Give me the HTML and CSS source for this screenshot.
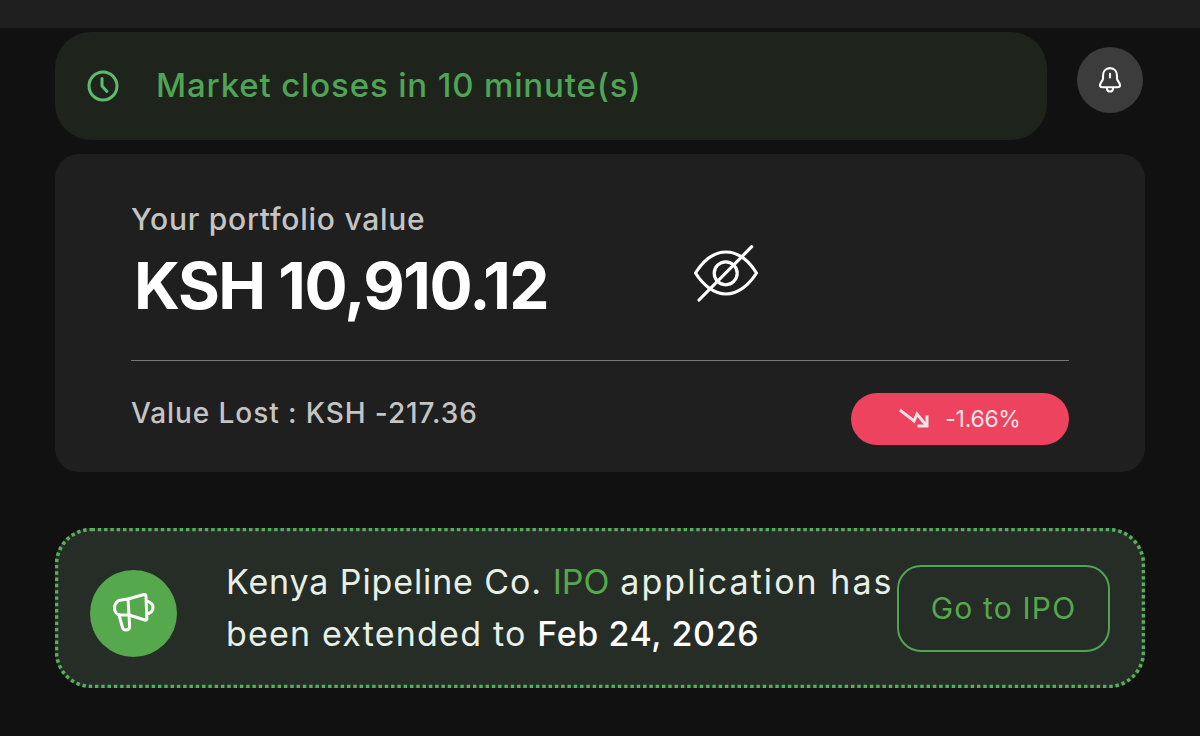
FILE: index.html
```html
<!DOCTYPE html>
<html lang="en">

<head>
    <meta charset="UTF-8">
    <meta name="viewport" content="width=device-width, initial-scale=1.0">
    <title>Portfolio</title>
    <link rel="stylesheet" href="styles.css">
</head>

<body>
    <div class="topbar"></div>
    <main>
        <div class="status-row">
            <div class="market-status">
                <svg class="clock-icon" viewBox="0 0 32 32" fill="none" stroke="#5fbb6c" stroke-width="3" stroke-linecap="round" stroke-linejoin="round">
                    <circle cx="16" cy="16" r="14"/>
                    <path d="M15 8.500V16l5 5.500"/>
                </svg>
                <span>Market closes in 10 minute(s)</span>
            </div>
            <button class="bell-button" aria-label="Notifications">
                <svg viewBox="0 0 24 24" width="30" height="30" fill="none" stroke="#fff" stroke-width="1.700" stroke-linecap="round" stroke-linejoin="round">
                    <path d="M12 2.500c-3.600 0-5.600 2.800-5.600 6v2.500c0 1.500-2.400 3.300-2.400 5 0 1.200.8 1.800 2 1.800h12c1.200 0 2-.6 2-1.800 0-1.700-2.400-3.500-2.400-5V8.500c0-3.200-2-6-5.600-6z"/>
                    <path d="M9.500 19c.3 1.500 1.300 2.200 2.500 2.200s2.200-.7 2.500-2.200"/>
                    <path d="M12 7v3"/>
                </svg>
            </button>
        </div>

        <section class="portfolio-card">
            <div class="portfolio-label">Your portfolio value</div>
            <div class="portfolio-value-row">
                <div class="portfolio-value">KSH 10,910.12</div>
                <svg class="eye-icon" viewBox="0 0 66 58" fill="none" stroke="#fff" stroke-width="3.200" stroke-linecap="round" stroke-linejoin="round">
                    <path d="M2.500 29C10 17 20 8 33 8S56 17 63.500 29C56 41 45 50 33 50S10 41 2.500 29z"/>
                    <circle cx="32.700" cy="29.300" r="11.500"/>
                    <path d="M58.700 2.700L6 56"/>
                </svg>
            </div>
            <hr class="divider">
            <div class="portfolio-footer">
                <div class="value-lost">Value Lost : KSH -217.36</div>
                <div class="change-pill">
                    <svg viewBox="0 0 30 20" width="30" height="20" fill="none" stroke="#f0e4e6" stroke-width="3" stroke-linecap="square" stroke-linejoin="miter">
                        <path d="M2 2l13 10 3-7 9 11"/>
                        <path d="M28 8v9h-8"/>
                    </svg>
                    <span>-1.66%</span>
                </div>
            </div>
        </section>

        <section class="ipo-banner">
            <svg class="ipo-border" viewBox="0 0 1090 160" fill="none" stroke="#55b05c" stroke-width="3.600" stroke-dasharray="3.400 2.900">
                <rect x="1.500" y="1.500" width="1087" height="157" rx="35"/>
            </svg>
            <div class="ipo-icon">
                <svg viewBox="0 0 42 40" width="42" height="40" fill="none" stroke="#fff" stroke-width="3" stroke-linecap="round" stroke-linejoin="round">
                    <path d="M15 6L31 1.500c1.200-.3 1.800.3 1.900 1.300l1 22.700c0 1.200-.8 1.900-2 1.500L16 22H8C3.500 22 1.500 18.500 1.500 15S4 7 8.500 7z"/>
                    <path d="M15 6l1 16"/>
                    <path d="M33.500 8c4 1 6.500 3.500 6.500 6.500s-2 5.500-6 6.500"/>
                    <path d="M6 22l3.500 12.500c.4 1.600 1.600 2.500 3.300 2.500 2.200 0 3.800-1.200 3.800-3.500L16 22"/>
                </svg>
            </div>
            <p class="ipo-text"><span class="ipo-lead">Kenya Pipeline Co.</span> <span class="ipo-word">IPO</span> <span class="ipo-rest">application has</span> <span>been extended to</span> <strong>Feb 24, 2026</strong></p>
            <button class="ipo-button">Go to IPO</button>
        </section>
    </main>
</body>

</html>
```

FILE: styles.css
```css
body {
    margin: 0;
    height: 736px;
    overflow: hidden;
    background-color: #111111;
    font-family: "Inter", "Liberation Sans", sans-serif;
}

.topbar {
    height: 28px;
    background-color: #1f1f1f;
}

main {
    padding: 4px 55px 0 55px;
    display: flex;
    flex-direction: column;
}

.status-row {
    display: flex;
    align-items: flex-start;
}

.market-status {
    width: 992px;
    height: 108px;
    border-radius: 36px;
    background-color: #1e231c;
    color: #4fa455;
    font-size: 33px;
    font-weight: 500;
    letter-spacing: 0.850px;
    display: flex;
    align-items: center;
    padding-left: 32px;
    box-sizing: border-box;
}

.market-status span {
    margin-top: -2px;
}

.clock-icon {
    width: 32px;
    height: 32px;
    margin-right: 37px;
}

.bell-button {
    width: 66px;
    height: 66px;
    margin: 15px 0 0 30px;
    padding: 0;
    border: none;
    border-radius: 50%;
    background-color: #3c3c3c;
    display: flex;
    align-items: center;
    justify-content: center;
}

.portfolio-card {
    margin-top: 14px;
    height: 318px;
    box-sizing: border-box;
    padding: 47px 76px 0 76px;
    border-radius: 24px;
    background-color: #1f1f1f;
}

.portfolio-label {
    font-size: 30px;
    font-weight: 500;
    line-height: 36px;
    letter-spacing: 0.750px;
    color: #c4c4c4;
}

.portfolio-value-row {
    display: flex;
    align-items: center;
    height: 64px;
    margin-top: 16px;
}

.portfolio-value {
    width: 562px;
    padding-left: 3px;
    box-sizing: border-box;
    font-size: 64px;
    font-weight: 700;
    letter-spacing: -1.500px;
    color: #ffffff;
}

.eye-icon {
    width: 66px;
    height: 58px;
    margin-top: -24px;
}

.divider {
    margin: 43px 0 0 0;
    border: none;
    height: 1px;
    background-color: #77777b;
}

.portfolio-footer {
    display: flex;
    justify-content: space-between;
    align-items: center;
    margin-top: 32px;
}

.value-lost {
    font-size: 28px;
    font-weight: 500;
    letter-spacing: 0.920px;
    color: #c4c4c4;
    margin-top: -12px;
}

.change-pill {
    width: 218px;
    height: 52px;
    border-radius: 26px;
    background-color: #ee435f;
    color: #f0e4e6;
    font-size: 23px;
    letter-spacing: -0.300px;
    display: flex;
    align-items: center;
    justify-content: center;
    gap: 16px;
}

.ipo-banner {
    position: relative;
    margin-top: 56px;
    height: 160px;
    box-sizing: border-box;
    padding: 0 35px;
    border-radius: 36px;
    background-color: #262c26;
    display: flex;
    align-items: center;
}

.ipo-border {
    position: absolute;
    top: 0;
    left: 0;
    width: 100%;
    height: 100%;
}

.ipo-icon {
    flex: none;
    width: 87px;
    height: 87px;
    margin-top: 10px;
    border-radius: 50%;
    background-color: #55a84b;
    display: flex;
    align-items: center;
    justify-content: center;
}

.ipo-text {
    flex: none;
    width: 671px;
    margin: 0 0 0 49px;
    font-size: 34px;
    line-height: 52px;
    letter-spacing: 1.200px;
    color: #e6f0e6;
}

.ipo-lead {
    letter-spacing: 0.880px;
}

.ipo-word {
    letter-spacing: 0;
    color: #55a84b;
}

.ipo-rest {
    letter-spacing: 2.050px;
}

.ipo-text strong {
    font-weight: 500;
    letter-spacing: 0.600px;
    color: #ffffff;
}

.ipo-button {
    flex: none;
    width: 213px;
    height: 87px;
    padding: 0;
    border: 2px solid #4fa455;
    border-radius: 24px;
    background: none;
    color: #55a84b;
    font-family: inherit;
    font-size: 30px;
    letter-spacing: 1.200px;
}
```
